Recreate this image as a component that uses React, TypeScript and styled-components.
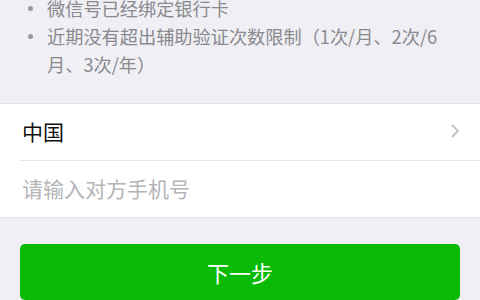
import React from "react";
import styled, { createGlobalStyle } from "styled-components";

const GlobalStyle = createGlobalStyle`
  html, body {
    margin: 0;
    padding: 0;
    background: #efeff4;
  }
  body {
    font-family: "Noto Sans CJK SC", "Noto Sans", sans-serif;
  }
`;

const Page = styled.div`
  width: 480px;
  height: 300px;
  overflow: hidden;
  background: #efeff4;
`;

const Notes = styled.ul`
  list-style: none;
  margin: -6px 0 0;
  padding: 0 22px 0 0;
`;

const Note = styled.li`
  display: flex;
  align-items: flex-start;
  font-size: 18.2px;
  line-height: 28px;
  color: #8a8a8e;
`;

const Dot = styled.span`
  flex: none;
  width: 5px;
  height: 5px;
  border-radius: 50%;
  background: #9a9a9e;
  margin: 12px 14px 0 28px;
`;

const Line = styled.span`
  display: block;
  white-space: nowrap;
`;

const Group = styled.div`
  margin-top: 25px;
  background: #ffffff;
  border-top: 1px solid #e3e3e6;
  border-bottom: 1px solid #e3e3e6;
`;

const Row = styled.div`
  display: flex;
  align-items: center;
  justify-content: space-between;
  height: 56px;
  padding: 0 20px 2px 22px;
  box-sizing: border-box;
  font-size: 21px;
`;

const Label = styled.span<{ $placeholder?: boolean }>`
  color: ${(p) => (p.$placeholder ? "#b4b4b8" : "#111111")};
`;

const Divider = styled.div`
  height: 1px;
  margin-left: 20px;
  background: #e6e6e8;
`;

const Button = styled.button`
  display: flex;
  align-items: center;
  justify-content: center;
  width: 440px;
  height: 56px;
  margin: 26px 20px 0;
  border: none;
  border-radius: 5px;
  background: #09bb07;
  color: #ffffff;
  font-family: inherit;
  font-size: 22px;
`;

function Chevron() {
  return (
    <svg width="9" height="14" viewBox="0 0 9 14" fill="none">
      <polyline
        points="1.5,1.5 7,7 1.5,12.5"
        stroke="#c4c4c8"
        strokeWidth="2"
        strokeLinejoin="round"
        strokeLinecap="round"
      />
    </svg>
  );
}

export default function App(): React.ReactElement {
  return (
    <>
      <GlobalStyle />
      <Page>
        <Notes>
          <Note>
            <Dot />
            <Line>微信号已经绑定银行卡</Line>
          </Note>
          <Note>
            <Dot />
            <div>
              <Line>近期没有超出辅助验证次数限制（1次/月、2次/6</Line>
              <Line>月、3次/年）</Line>
            </div>
          </Note>
        </Notes>
        <Group>
          <Row>
            <Label>中国</Label>
            <Chevron />
          </Row>
          <Divider />
          <Row>
            <Label $placeholder>请输入对方手机号</Label>
          </Row>
        </Group>
        <Button>下一步</Button>
      </Page>
    </>
  );
}
